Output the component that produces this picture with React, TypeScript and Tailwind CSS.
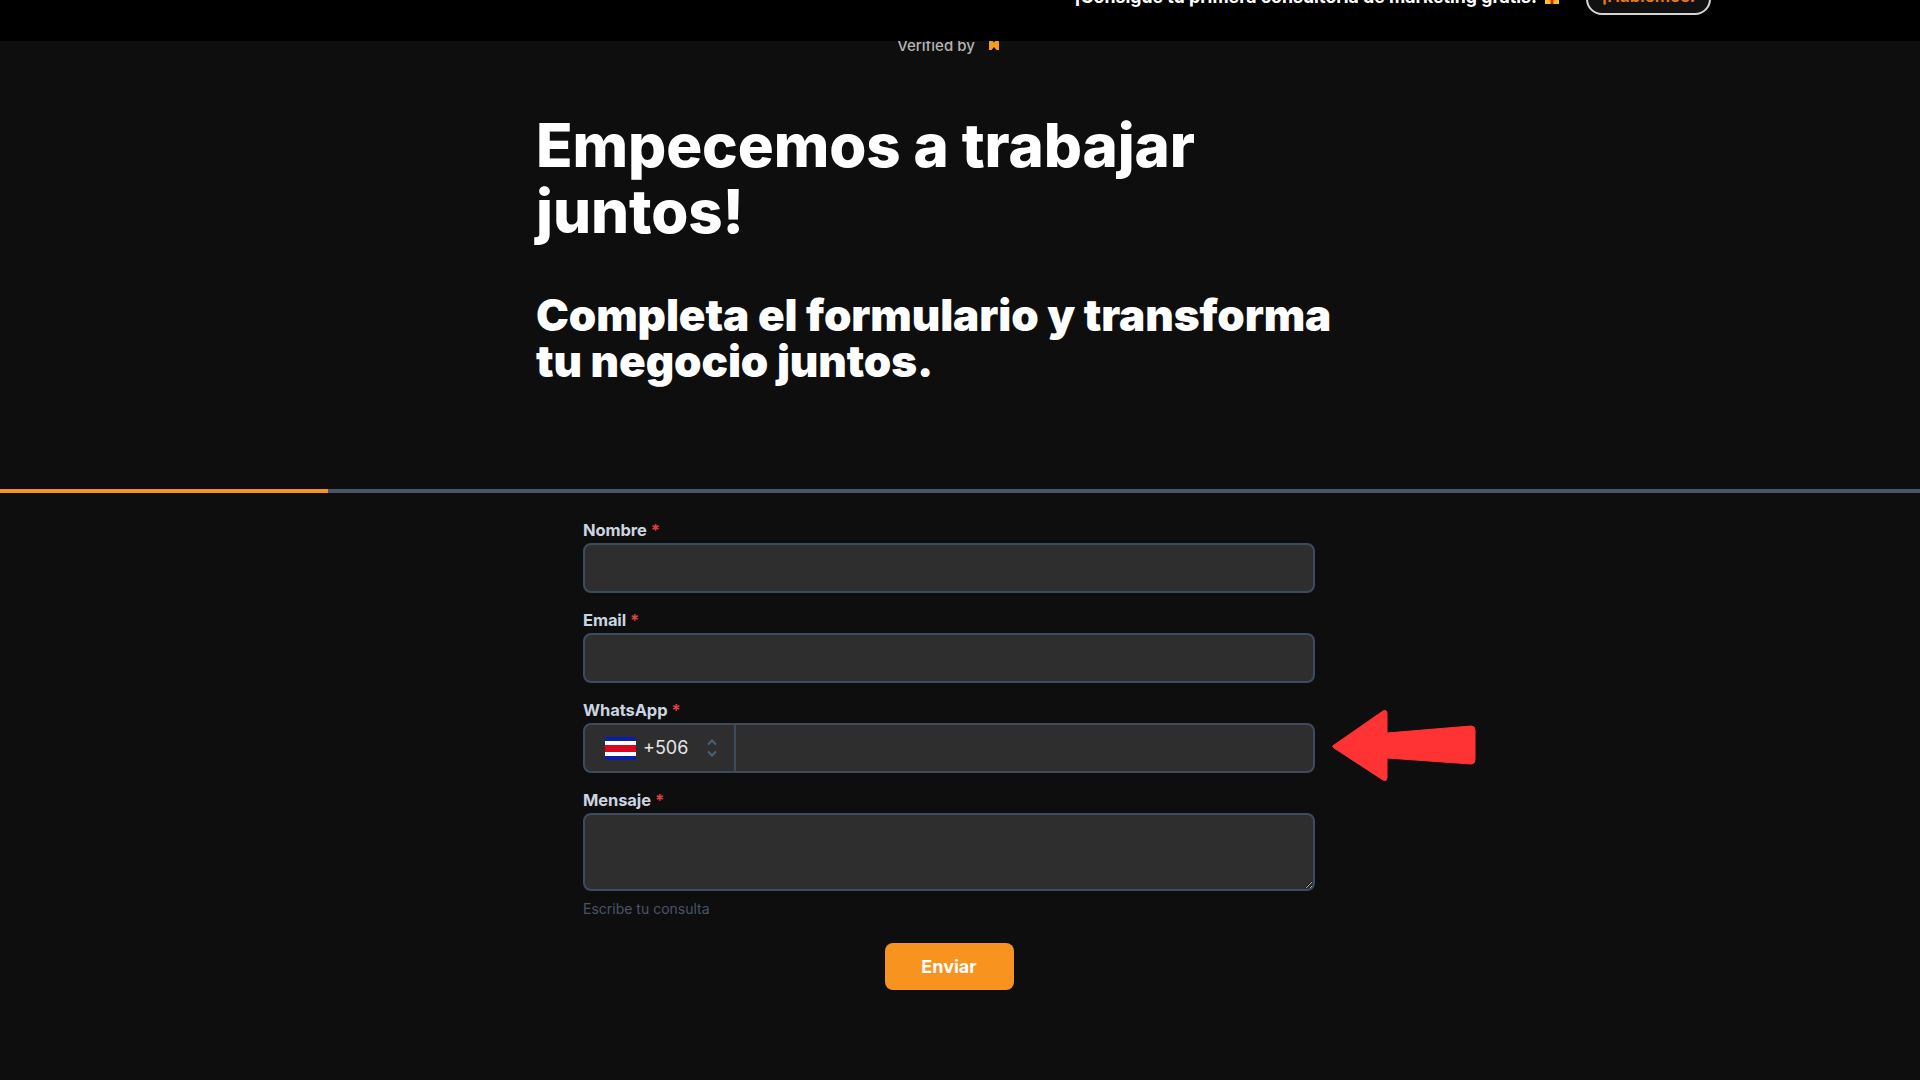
import React from "react";

const Field = ({ label, children }: { label: string; children: React.ReactNode }) => (
  <div className="mb-4">
    <label className="block h-6 text-[16.5px] leading-[22px] font-bold tracking-[-0.1px] text-[#cbd5e1]">
      {label}
      <span className="ml-[4px] text-[#e53e3e]">*</span>
    </label>
    {children}
  </div>
);

const inputClass =
  "block w-full h-[50px] rounded-lg border-2 border-[#3d4b5f] bg-[#2e2e2e] outline-none";

const CostaRicaFlag = () => (
  <span className="flex flex-col w-[31px] h-[23px]">
    <span className="h-1 bg-[#0a1fa8]" />
    <span className="h-1 bg-white" />
    <span className="h-[7px] bg-[#d8061e]" />
    <span className="h-1 bg-white" />
    <span className="h-1 bg-[#0a1fa8]" />
  </span>
);

const App = () => {
  return (
    <div className="min-h-[1080px] bg-[#0e0e0e] font-[Inter,sans-serif] overflow-hidden">
      <div className="relative z-10 flex h-[41px] items-end justify-end overflow-hidden bg-black pr-[209px] pb-[26px]">
        <div className="flex items-center gap-[27px]">
          <span className="flex items-center gap-2 text-[17.75px] leading-6 font-bold whitespace-nowrap text-white">
            ¡Consigue tu primera consultoría de marketing gratis!
            <svg width="14" height="14" viewBox="0 0 14 14">
              <rect x="0" y="0" width="14" height="14" fill="#fbbf24" />
              <rect x="5.5" y="0" width="3" height="14" fill="#dc2626" />
            </svg>
          </span>
          <button className="h-9 w-[125px] rounded-2xl border-2 border-[#d4d4d4] bg-[#111111] text-[17px] font-semibold text-[#e67e14]">
            ¡Hablemos!
          </button>
        </div>
      </div>

      <div className="pr-[22px]">
        <div className="-mt-[3px] flex h-[16px] items-center justify-center gap-[12px] text-[15px] font-medium text-[#b5b5b5]">
          <span>Verified by</span>
          <svg width="14" height="14" viewBox="0 0 14 14" className="mt-[-2px]">
            <path d="M2 12V4q0-2 2-2h1l2 2.5L9 2h1q2 0 2 2v8H9.5L7 9l-2.5 3z" fill="#f59e1b" />
          </svg>
        </div>

        <div className="mx-auto mt-[58px] w-[826px] text-white">
          <h1 className="text-[60px] leading-[66px] font-extrabold tracking-[-0.1px]">
            Empecemos a trabajar
            <br />
            juntos!
          </h1>
          <h2 className="mt-[48px] text-[44px] leading-[46px] font-black tracking-[-0.1px]">
            Completa el formulario y transforma
            <br />
            tu negocio juntos.
          </h2>
        </div>
      </div>

      <div className="mt-[105px] h-1 w-full bg-[#4b5563]">
        <div className="h-full w-[328px] bg-[#f7931e]" />
      </div>

      <div className="pr-[22px]">
        <form className="mx-auto mt-[26px] w-[732px]">
          <Field label="Nombre">
            <input className={inputClass} />
          </Field>
          <Field label="Email">
            <input className={inputClass} />
          </Field>
          <Field label="WhatsApp">
            <div className="flex h-[50px] rounded-lg border-2 border-[#3d4b5f] bg-[#2e2e2e]">
              <div className="flex w-[151px] items-center border-r-2 border-[#3d4b5f] pl-5 text-lg text-[#e5e5e5]">
                <CostaRicaFlag />
                <span className="ml-[7px]">+506</span>
                <svg width="12" height="20" viewBox="0 0 12 20" fill="none" stroke="#4f5f78" strokeWidth="2" className="ml-[18px]">
                  <path d="M2 6.5l4-4 4 4M2 13.5l4 4 4-4" />
                </svg>
              </div>
              <input className="min-w-0 flex-1 bg-transparent outline-none" />
            </div>
          </Field>
          <Field label="Mensaje">
            <textarea className="block h-[78px] w-full rounded-lg border-2 border-[#3d4b5f] bg-[#2e2e2e] outline-none" />
          </Field>
          <p className="-mt-[7px] text-sm leading-[18px] text-[#475569]">Escribe tu consulta</p>
          <div className="mt-[25px] flex justify-center">
            <button type="button" className="h-[47px] w-[129px] rounded-lg bg-[#f7931e] text-lg font-bold text-white">
              Enviar
            </button>
          </div>
        </form>
      </div>

      <svg width="146" height="76" viewBox="0 0 146 76" className="absolute left-[1331px] top-[708px]">
        <path
          d="M3 37 L52 3 Q56 1 56 6 V25 L140 18 Q144 18 144 22 V52 Q144 56 140 56 L56 50 V69 Q56 74 52 72 L3 40 Q0 38 3 37 Z"
          fill="#ff3333"
          stroke="#ff3333"
          strokeWidth="1"
        />
      </svg>
    </div>
  );
};

export default App;
